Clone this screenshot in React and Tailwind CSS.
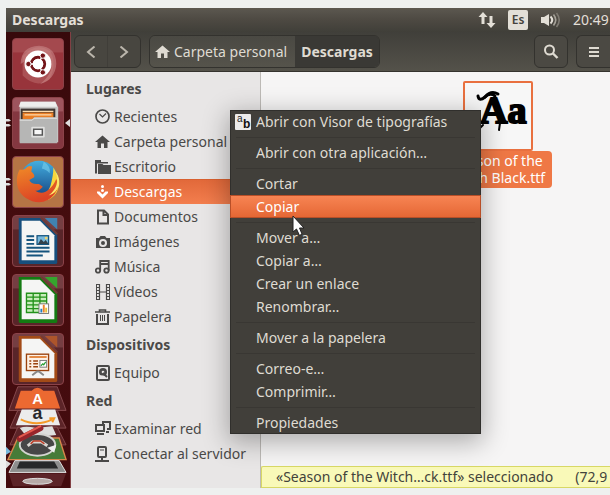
import React from "react";

const places = [
  { name: "Recientes", icon: "clock" },
  { name: "Carpeta personal", icon: "home" },
  { name: "Escritorio", icon: "folder" },
  { name: "Descargas", icon: "download", active: true },
  { name: "Documentos", icon: "doc" },
  { name: "Imágenes", icon: "camera" },
  { name: "Música", icon: "music" },
  { name: "Vídeos", icon: "film" },
  { name: "Papelera", icon: "trash" },
];
const devices = [{ name: "Equipo", icon: "disk" }];
const network = [
  { name: "Examinar red", icon: "network" },
  { name: "Conectar al servidor", icon: "server" },
];

const menuGroups = [
  ["Abrir con Visor de tipografías"],
  ["Abrir con otra aplicación…"],
  ["Cortar", "Copiar"],
  ["Mover a…", "Copiar a…", "Crear un enlace", "Renombrar…"],
  ["Mover a la papelera"],
  ["Correo-e…", "Comprimir…"],
  ["Propiedades"],
];

const glyphs = {
  clock: (
    <g fill="none" stroke="currentColor">
      <circle cx="7.5" cy="7.5" r="6.5" strokeWidth="1.7" />
      <path d="M4.5 5 L7.5 8 L11 4.5" strokeWidth="1.2" />
    </g>
  ),
  home: <path d="M7.5 1.5 L15 8 H12.5 V14 H9 V9.5 H6 V14 H2.5 V8 H0 Z" fill="currentColor" />,
  folder: (
    <g fill="currentColor">
      <path d="M0 1 H6 V3 H13 V4.5 H2 V14.5 H0 Z" />
      <path d="M3 5 H7.5 L8.5 6 H16 V15 H3 Z" />
    </g>
  ),
  download: (
    <g fill="currentColor">
      <circle cx="7.5" cy="2.5" r="1.5" />
      <circle cx="7.5" cy="6.5" r="1.5" />
      <path d="M2 7.5 H4.5 L7.500 10.500 L10.500 7.500 H13 V9 L7.500 14.500 L2 9 Z" />
    </g>
  ),
  doc: <path d="M3 1.5 H9 L13 5.5 V14.5 H3 Z M8.5 2 V6 H13" fill="none" stroke="currentColor" strokeWidth="2" />,
  camera: (
    <path
      fillRule="evenodd"
      fill="currentColor"
      d="M1 4 H4 L5.5 2 H10 L11.5 4 H15 V14 H1 Z M8 5 A4 4 0 1 0 8 13 A4 4 0 1 0 8 5 Z M8 7 A2 2 0 1 1 8 11 A2 2 0 1 1 8 7 Z"
    />
  ),
  music: (
    <g fill="none" stroke="currentColor" strokeWidth="1.8">
      <circle cx="3" cy="11.5" r="2.2" />
      <circle cx="11.5" cy="11.5" r="2.2" />
      <path d="M5.2 11.5 V2 H13.7 V11.5 M5.2 5 H13.7" />
    </g>
  ),
  film: (
    <g fill="none" stroke="currentColor">
      <path d="M4.5 0 V16 M11.5 0 V16 M4.5 8 H11.5" strokeWidth="1.2" />
      <path d="M1.5 0 V16 M14.5 0 V16" strokeWidth="1" />
      <path d="M3 0 V16 M13 0 V16" strokeWidth="2" strokeDasharray="1 2" />
    </g>
  ),
  trash: (
    <g fill="none" stroke="currentColor">
      <path d="M0 3 H15 M4.5 3 V1 H10.5 V3" strokeWidth="1.6" />
      <path d="M2 5 V15 H13 V5" strokeWidth="2" />
      <path d="M5.5 6 V12 M7.5 6 V12 M9.5 6 V12" strokeWidth="1" />
    </g>
  ),
  disk: (
    <g>
      <rect x="2" y="1" width="12" height="14" rx="1" fill="none" stroke="currentColor" strokeWidth="2" />
      <circle cx="8" cy="7" r="4" fill="currentColor" />
      <circle cx="8" cy="7" r="1.3" fill="#e7e5e4" />
      <path d="M8 8 L12 12" stroke="currentColor" strokeWidth="2" />
      <path d="M4.5 11 H8 V12.5" fill="none" stroke="#e7e5e4" strokeWidth="1.2" />
    </g>
  ),
  network: (
    <g fill="none" stroke="currentColor" strokeWidth="2">
      <path d="M8 3 V1 H15 V8 H12" />
      <path d="M1 4 H9 V10 H1 Z" />
      <path d="M2 13 H9 M11 11 H14" />
    </g>
  ),
  server: (
    <g fill="none" stroke="currentColor" strokeWidth="2">
      <rect x="3" y="1" width="8" height="10" rx="1" />
      <path d="M7 11 V15 M0 15 H14" />
      <path d="M5 4 H9" strokeWidth="1" />
    </g>
  ),
};

function Glyph({ name }) {
  return (
    <svg viewBox="0 0 16 16" className="h-4 w-4 shrink-0" aria-hidden="true">
      {glyphs[name]}
    </svg>
  );
}

function PlaceGroup({ title, items }) {
  return (
    <section>
      <h2 className="flex h-[31px] items-center pl-[15px] text-sm font-bold">{title}</h2>
      {items.map((p) => (
        <a
          key={p.name}
          href="#"
          className={
            p.active
              ? "flex h-[25px] items-center gap-[3px] border-t border-[#d9602f] bg-linear-to-b from-[#e2693a] to-[#f37e4e] pl-6 text-sm whitespace-nowrap text-white"
              : "flex h-[25px] items-center gap-[3px] pl-6 text-sm whitespace-nowrap"
          }
        >
          <Glyph name={p.icon} />
          {p.name}
        </a>
      ))}
    </section>
  );
}

function TopPanel() {
  return (
    <header className="flex h-6 items-center bg-linear-to-b from-[#5c5850] via-[#4d4942] to-[#403f39] pl-1.5 text-[#e3dfd7]">
      <h1 className="grow text-sm font-bold">Descargas</h1>
      <svg viewBox="0 0 18 16" className="mr-3 h-4 w-[18px]" fill="#e3dfd7" aria-hidden="true">
        <path d="M5 0 L9.5 5 H6.5 V12 H3.5 V5 H0.5 Z M13 16 L8.5 11 H11.5 V4 H14.5 V11 H17.5 Z" />
      </svg>
      <span className="mr-[13px] flex h-5 w-5 items-center justify-center rounded-xs bg-[#e3dfd7] text-xs font-semibold text-[#45423c]">
        Es
      </span>
      <svg viewBox="0 0 20 16" className="mr-3 h-4 w-5" aria-hidden="true">
        <path d="M0 5 H3 L8 2 V14 L3 11 H0 Z" fill="#e3dfd7" />
        <g fill="none" strokeWidth="1.6">
          <path d="M9.5 4.5 Q13 8 9.5 11.5" stroke="#e3dfd7" strokeWidth="2" />
          <path d="M12.5 2.5 Q17 8 12.5 13.5" stroke="#a5a198" />
          <path d="M15.5 1 Q21 8 15.5 15" stroke="#7e7a72" />
        </g>
      </svg>
      <time className="w-[37px] text-sm">20:49</time>
    </header>
  );
}

function Toolbar() {
  return (
    <div className="flex h-10 items-center border-b border-[#35332e] bg-linear-to-b from-[#403f3a] to-[#54524a] pl-[3px] text-[#dfdbd2]">
      <div className="flex h-[33px] w-[67px] rounded-md border border-[#33322e] bg-[#484640] text-[#bbb6ac]">
        <button aria-label="Atrás" className="flex flex-1 items-center justify-center border-r border-[#403e39]">
          <svg viewBox="0 0 10 12" className="h-3 w-2.5" fill="none" stroke="currentColor" strokeWidth="2">
            <path d="M8.5 0.5 L2 6 L8.5 11.5" />
          </svg>
        </button>
        <button aria-label="Adelante" className="flex flex-1 items-center justify-center">
          <svg viewBox="0 0 10 12" className="h-3 w-2.5" fill="none" stroke="currentColor" strokeWidth="2">
            <path d="M1.5 0.5 L8 6 L1.5 11.5" />
          </svg>
        </button>
      </div>
      <nav className="ml-2 flex h-[33px] overflow-hidden rounded-md border border-[#33322e] text-sm whitespace-nowrap">
        <button className="flex w-[145px] items-center gap-[3px] bg-linear-to-b from-[#4a4943] to-[#55534b] pl-[5px]">
          <Glyph name="home" />
          Carpeta personal
        </button>
        <button className="w-[84px] bg-[#3a3935] text-center font-bold">Descargas</button>
      </nav>
      <button
        aria-label="Buscar"
        className="mr-2 ml-auto flex h-[33px] w-[34px] items-center justify-center rounded-md border border-[#33322e] bg-[#4b4943]"
      >
        <svg viewBox="0 0 16 16" className="h-4 w-4" fill="none" stroke="currentColor">
          <circle cx="6.5" cy="6" r="4.5" strokeWidth="2" />
          <path d="M10 9.5 L14.500 14" strokeWidth="2.4" />
        </svg>
      </button>
      <button
        aria-label="Menú"
        className="flex h-[33px] w-[34px] items-center justify-center rounded-l-md border border-r-0 border-[#33322e] bg-[#4b4943]"
      >
        <svg viewBox="0 0 10 12" className="h-3 w-2.5" fill="currentColor">
          <path d="M0 1 H10 V3 H0 Z M0 5 H10 V7 H0 Z M0 9 H10 V11 H0 Z" />
        </svg>
      </button>
    </div>
  );
}

function UbuntuIcon() {
  return (
    <svg viewBox="0 0 52 52" className="h-full w-full">
      <rect width="52" height="14" fill="#c07a7c" opacity="0.3" />
      <path d="M8 26 Q8 8 27 7 Q45 8 45 26 Q44 42 28 47 Q42 36 40 24 Q32 8 8 26 Z" fill="#c88587" opacity="0.6" />
      <path d="M10 18 Q24 2 39 13 Q46 26 38 42 Q24 52 10 38 Z" fill="#ce8a88" opacity="0.35" />
      <circle cx="26" cy="26" r="14" fill="#fff" />
      <circle cx="26" cy="26" r="7" fill="none" stroke="#741519" strokeWidth="3" />
      <path d="M26 26 L16 26 M26 26 L31 17 M26 26 L31 35" stroke="#fff" strokeWidth="1.5" />
      <circle cx="26" cy="26" r="5.5" fill="#fff" />
      <g fill="#741519" stroke="#fff" strokeWidth="1">
        <circle cx="16" cy="26" r="2.8" />
        <circle cx="31" cy="17.3" r="2.8" />
        <circle cx="31" cy="34.7" r="2.8" />
      </g>
    </svg>
  );
}

function FilesIcon() {
  return (
    <svg viewBox="0 0 52 52" className="h-full w-full">
      <rect width="52" height="14" fill="#d99da2" opacity="0.3" />
      <path d="M8 4 H44 L47 10 V46 H7 V10 Z" fill="#c9c9c8" />
      <path d="M8 4 H44 L46 9 H6 Z" fill="#eeeeed" />
      <rect x="8" y="11" width="36" height="12" fill="#3e3632" />
      <path d="M10 15 H42 V22 H10 Z" fill="#e97d25" />
      <path d="M10 14 H42 M12 17.5 H40" stroke="#ffdcae" strokeWidth="1.3" />
      <path d="M7 22 H20 L22 20 H46 V47 H7 Z" fill="#b6b6b5" />
      <path d="M7 23 H20 L22 21 H46" stroke="#e8e8e8" fill="none" />
      <rect x="19" y="30" width="14" height="11" rx="1" fill="#e0e0df" />
      <rect x="21.5" y="32.5" width="9" height="6" fill="#f7f7f7" stroke="#555" strokeWidth="1.5" />
    </svg>
  );
}

function FirefoxIcon() {
  return (
    <svg viewBox="0 0 52 52" className="h-full w-full">
      <defs>
        <linearGradient id="globe" x1="0" y1="0" x2="0" y2="1">
          <stop offset="0" stopColor="#43aee0" />
          <stop offset="1" stopColor="#123f7d" />
        </linearGradient>
        <linearGradient id="fox" x1="0" y1="0" x2="0.3" y2="1">
          <stop offset="0" stopColor="#f08b27" />
          <stop offset="1" stopColor="#dc4425" />
        </linearGradient>
      </defs>
      <circle cx="27" cy="24" r="20" fill="url(#globe)" />
      <path d="M32 5 Q40 10 38 17 Q35 13 30 12 Z" fill="#70c8e7" opacity="0.7" />
      <path d="M42 11 Q53 28 43 40 Q34 49 22 43 Q36 41 39 30 Q42 19 42 11 Z" fill="#f9d63c" />
      <path d="M7 13 Q10 14 13 12 Q16 8 20 10 L19 15 Q23 18 22 21 L17 24 Q19 29 27 28 L31 31 Q27 36 23 35 Q31 40 38 33 Q42 30 45 23 Q50 30 43 39 Q34 50 20 46 Q4 40 4 25 Q4 18 7 13 Z" fill="url(#fox)" />
      <path d="M44 15 Q50 30 37 40 Q45 38 48 29 Q49 21 44 15 Z" fill="#fce76a" />
    </svg>
  );
}

function OfficeIcon({ color, light, children }) {
  return (
    <svg viewBox="0 0 52 52" className="h-full w-full">
      <rect width="52" height="14" fill="#b67b7e" opacity="0.3" />
      <path d="M6 2 H30 L46 18 V48 Q46 50 44 50 H8 Q6 50 6 48 Z" fill={color} />
      <path d="M33 2 H46 V14 Z" fill={light} />
      <path d="M9 5 H28 L43 20 V46 H9 Z" fill="#f5f5f4" />
      <path d="M29 2 L46 19" stroke="#733a35" strokeWidth="2" />
      {children}
    </svg>
  );
}

const writerArt = (
  <g stroke="#15547d" strokeWidth="2">
    <path d="M14 21 H22 M14 25 H22 M14 29 H22 M14 33 H38 M14 37 H38 M14 41 H31" />
    <rect x="25" y="20.5" width="12" height="9" fill="#79b9dc" strokeWidth="1.3" />
    <path d="M26 29 L29 24 L32 27 L34 25 L37 29 Z" fill="#34414b" stroke="none" />
    <circle cx="34.5" cy="23" r="1.5" fill="#f0d36b" stroke="none" />
  </g>
);
const calcArt = (
  <g>
    <rect x="14" y="19" width="21" height="20" fill="#c8edbb" />
    <path d="M14 19 H35 V39 H14 Z M14 23 H35 M14 27 H35 M14 31 H35 M14 35 H35 M21 19 V39 M28 19 V39" fill="none" stroke="#23921a" strokeWidth="1.4" />
    <rect x="27" y="30" width="10" height="10" fill="#fff" stroke="#777" />
    <path d="M29.5 39 V35" stroke="#247fc0" strokeWidth="2" />
    <path d="M32 39 V31" stroke="#ed8329" strokeWidth="2" />
    <path d="M34.5 39 V34" stroke="#e6c13b" strokeWidth="2" />
  </g>
);
const impressArt = (
  <g fill="none" stroke="#9a420e">
    <rect x="14" y="21" width="23" height="17" fill="#fdf0e5" strokeWidth="1.4" />
    <path d="M17 24 H35" stroke="#e48a45" strokeWidth="2" />
    <path d="M17 28 H19 M17 31 H19 M17 34 H19 M21 28 H26 M21 31 H26 M21 34 H26" strokeWidth="1.5" />
    <rect x="28" y="27.5" width="7" height="7" stroke="#777" fill="#fff" />
    <path d="M29 33 L31 31 L32 32 L34 29" stroke="#259d32" strokeWidth="1.2" />
    <path d="M20 43 L25 39 H27 L32 43" stroke="#888" strokeWidth="2" />
  </g>
);

function LauncherTile({ label, tone, running, focused, children }) {
  return (
    <button aria-label={label} className="flex h-[52px] w-full shrink-0 items-center">
      <svg viewBox="0 0 6 10" className="h-2.5 w-1.5" fill="#dedede" aria-hidden="true">
        {running && <path d="M0 1 H3 L5 2.5 L3 3.5 H0 Z M0 6 H3 L5 7.5 L3 8.5 H0 Z" />}
      </svg>
      <span className={`h-[52px] w-[52px] overflow-hidden rounded border border-[#8b4248] ${tone}`}>{children}</span>
      <svg viewBox="0 0 6 10" className="h-2.5 w-1.5" fill="#dedede" aria-hidden="true">
        {focused && <path d="M6 1 L1 5 L6 9 Z" />}
      </svg>
    </button>
  );
}

function FoldedStack() {
  return (
    <svg viewBox="0 0 65 102" className="h-[102px] w-full shrink-0" role="img" aria-label="Más aplicaciones">
      <g fill="#5c2428" stroke="#86494d" strokeWidth="1">
        <path d="M12 1 H52 L61 25 H3 Z" />
        <path d="M12 25 H52 L61 43 H4 Z" />
        <path d="M12 42 H52 L61 60 H4 Z" />
      </g>
      <path d="M15 5 H26 Q32 -1 38 5 H49 L55 23 H9 Z" fill="#ec6931" />
      <path d="M16 24 H50 L55 40 H10 Z" fill="#ececec" />
      <text x="32" y="18" textAnchor="middle" fontFamily="Liberation Sans" fontSize="15" fontWeight="bold" fill="#fff">A</text>
      <text x="32" y="34" textAnchor="middle" fontFamily="Liberation Sans" fontSize="18" fontWeight="bold" fill="#28292c">a</text>
      <path d="M15 34 Q31 42 47 34 M44 33 L49 33 L47 37" fill="none" stroke="#f49a28" strokeWidth="2" />
      <path d="M14 43 Q20 40 30 43 L47 41 L51 50 L22 53 Z" fill="#dddedd" />
      <path d="M12 53 H54 L61 75 H2 Z" fill="#467b38" stroke="#d7864b" strokeWidth="1.4" />
      <ellipse cx="32" cy="60" rx="18" ry="11" fill="#474747" stroke="#d3d3d0" strokeWidth="2" />
      <path d="M22 61 L27 57 H36 L42 61" fill="none" stroke="#d9d6d1" strokeWidth="3" />
      <path d="M25 59 L28 56 H35 L39 59" fill="none" stroke="#bd3e27" strokeWidth="1.5" />
      <path d="M42 63 L51 60 L49 68 Z" fill="#eee" />
      <path d="M14 54 L35 43" stroke="#98252b" strokeWidth="6" strokeLinecap="round" />
      <path d="M14 52 L35 41" stroke="#e45b4f" strokeWidth="2" strokeLinecap="round" />
      <path d="M9 76 H54 L61 88 H3 Z" fill="#8d8e8d" stroke="#e0e0df" />
      <path d="M14 77 H49 L53 84 H11 Z" fill="#272929" />
      <path d="M3 89 H61 L56 102 H7 Z" fill="#5c2428" />
      <ellipse cx="32" cy="97" rx="15" ry="3" fill="#b7aaa8" stroke="#ddd" />
      <path d="M0 62 L5 67 L0 70 Z" fill="#77badd" />
      <path d="M0 76 L5 79 L0 84 Z" fill="#ddd" />
    </svg>
  );
}

function Launcher() {
  return (
    <aside className="flex w-[65px] shrink-0 flex-col border-r border-[#814044] bg-linear-to-b from-[#37090b] via-[#480d0f] to-[#420b0e] pt-1.5">
      <div className="flex flex-col gap-[7px]">
        <LauncherTile label="Inicio" tone="bg-[#98343b]"><UbuntuIcon /></LauncherTile>
        <LauncherTile label="Archivos" tone="bg-[#843740]" running focused><FilesIcon /></LauncherTile>
        <LauncherTile label="Firefox" tone="bg-[#b57445]" running><FirefoxIcon /></LauncherTile>
        <LauncherTile label="Writer" tone="bg-[#592529]">
          <OfficeIcon color="#174f7d" light="#4082b1">{writerArt}</OfficeIcon>
        </LauncherTile>
        <LauncherTile label="Calc" tone="bg-[#592529]">
          <OfficeIcon color="#147b12" light="#35a52d">{calcArt}</OfficeIcon>
        </LauncherTile>
        <LauncherTile label="Impress" tone="bg-[#592529]">
          <OfficeIcon color="#a34b17" light="#ad552b">{impressArt}</OfficeIcon>
        </LauncherTile>
      </div>
      <FoldedStack />
    </aside>
  );
}

function ContextMenu() {
  return (
    <div
      role="menu"
      className="absolute top-[110px] left-[230px] w-[251px] bg-[#413f3a] text-sm text-[#dfdbd2] shadow-[0_6px_24px_2px_rgba(0,0,0,0.3)] ring-1 ring-[#302f2c] ring-inset"
    >
      {menuGroups.map((group, i) => (
        <div key={group[0]}>
          {i > 0 && (
            <div role="separator" className="flex h-2 items-center px-1.5">
              <div className="h-px w-full bg-[#393733]" />
            </div>
          )}
          {group.map((label) => (
            <button
              key={label}
              role="menuitem"
              className={
                label === "Copiar"
                  ? "flex h-[23px] w-full items-center border border-[#b84f28] bg-linear-to-b from-[#f78453] to-[#e56734] pl-[25px] text-white"
                  : "flex h-[23px] w-full items-center pl-[5px]"
              }
            >
              {label !== "Copiar" && (
                <span className="mr-[5px] flex h-4 w-4 items-center justify-center">
                  {i === 0 && (
                    <svg viewBox="0 0 16 16" className="h-4 w-4" aria-hidden="true">
                      <rect width="16" height="16" rx="1" fill="#ecebea" />
                      <text x="2" y="8" fontFamily="Liberation Sans" fontSize="10" fill="#222">a</text>
                      <text x="8" y="14" fontFamily="Liberation Sans" fontSize="12" fontWeight="bold" fill="#111">b</text>
                    </svg>
                  )}
                </span>
              )}
              {label}
            </button>
          ))}
        </div>
      ))}
    </div>
  );
}

function SelectedFile() {
  return (
    <figure className="mt-[9px] ml-[183px] flex w-[108px] flex-col items-center">
      <div className="h-[70px] w-[70px] rounded-xs border-2 border-[#e9703f] bg-[#f7f7f7]">
        <svg viewBox="0 0 66 66" className="h-full w-full">
          <text x="15" y="40" fontFamily="Liberation Serif" fontSize="38" fontWeight="bold" fill="#000" stroke="#000" strokeWidth="2">
            Aa
          </text>
          <g fill="none" stroke="#000" strokeLinecap="round">
            <path d="M13 13 Q14 19 20 14 Q25 9 30 13" strokeWidth="3" />
            <path d="M20 14 Q26 7 33 11" strokeWidth="3" />
            <path d="M35 40 L34 47" strokeWidth="2" />
            <path d="M18 42 L14 46" strokeWidth="2" />
          </g>
        </svg>
      </div>
      <figcaption className="w-full rounded bg-[#ef7845] pt-px pb-0.5 text-center text-sm leading-[17px] text-white">
        Season of the
        <br />
        Witch Black.ttf
      </figcaption>
    </figure>
  );
}

export default function App() {
  return (
    <main className="relative flex min-h-screen flex-col overflow-hidden bg-[#eef0ef] pt-2 pb-[7px] pl-1.5 font-['Noto_Sans','Open_Sans',sans-serif] text-[#4a4948]">
      <TopPanel />
      <div className="flex flex-1">
        <Launcher />
        <div className="flex min-w-0 flex-1 flex-col">
          <Toolbar />
          <div className="flex flex-1">
            <nav className="w-[190px] shrink-0 border-r border-[#bdbab6] bg-[#e8e6e6] pt-px">
              <PlaceGroup title="Lugares" items={places} />
              <PlaceGroup title="Dispositivos" items={devices} />
              <PlaceGroup title="Red" items={network} />
            </nav>
            <section className="flex min-w-0 flex-1 flex-col overflow-hidden bg-[#f6f5f5]">
              <SelectedFile />
              <footer className="mt-auto flex h-[22px] items-center gap-[22px] overflow-hidden rounded-tl-xs border border-r-0 border-[#d8d865] bg-[#f9f9b8] pl-3.5 text-sm whitespace-nowrap text-[#43433b]">
                <span>«Season of the Witch…ck.ttf» seleccionado</span>
                <span>(72,9</span>
              </footer>
            </section>
          </div>
        </div>
      </div>
      <ContextMenu />
      <svg viewBox="0 0 13 22" className="absolute top-[215px] left-[292px] h-[22px] w-[13px]" aria-hidden="true">
        <path d="M1 1 V17 L4.5 14 L7.5 20.5 L10 19 L7.5 13 H12 Z" fill="#fff" stroke="#222" strokeWidth="1" />
      </svg>
    </main>
  );
}
